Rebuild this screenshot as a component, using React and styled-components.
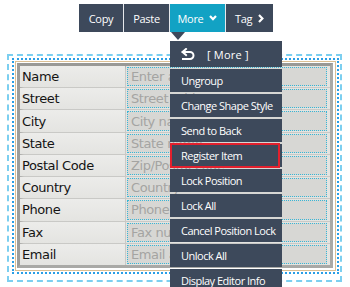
import React from 'react'
import styled, { createGlobalStyle } from 'styled-components'

const GlobalStyle = createGlobalStyle`
  html, body {
    margin: 0;
    padding: 0;
    background: #ffffff;
  }
`

const rows = [
  { label: 'Name', hint: 'Enter a name' },
  { label: 'Street', hint: 'Street address' },
  { label: 'City', hint: 'City name' },
  { label: 'State', hint: 'State name' },
  { label: 'Postal Code', hint: 'Zip/Postal code' },
  { label: 'Country', hint: 'Country name' },
  { label: 'Phone', hint: 'Phone number' },
  { label: 'Fax', hint: 'Fax number' },
  { label: 'Email', hint: 'Email address' },
]

const menuItems = [
  'Ungroup',
  'Change Shape Style',
  'Send to Back',
  'Register Item',
  'Lock Position',
  'Lock All',
  'Cancel Position Lock',
  'Unlock All',
  'Display Editor Info',
]

const BackIcon = () => (
  <svg width='14' height='13' viewBox='0 0 14 13' fill='none'>
    <path
      d='M5 1 L1.5 4 L5 7 M1.5 4 H9 a3.5 3.5 0 0 1 0 7 H2'
      stroke='#fff'
      strokeWidth='2'
      strokeLinecap='square'
      strokeLinejoin='miter'
    />
  </svg>
)

const ChevronDown = () => (
  <svg width='8' height='6' viewBox='0 0 8 6'>
    <path d='M1 1 L4 4.2 L7 1' stroke='#fff' strokeWidth='2.2' fill='none' />
  </svg>
)

const ChevronRight = () => (
  <svg width='6' height='9' viewBox='0 0 6 9'>
    <path d='M1 1 L4.4 4.5 L1 8' stroke='#fff' strokeWidth='2.2' fill='none' />
  </svg>
)

export default function App() {
  return (
    <>
      <GlobalStyle />
      <Page>
        <OuterFrame>
          <InnerFrame>
            <TanFrame>
              <FormTable>
                {rows.map((row) => (
                  <FormRow key={row.label}>
                    <LabelCell>{row.label}</LabelCell>
                    <InputCell>
                      <InputBox>{row.hint}</InputBox>
                    </InputCell>
                  </FormRow>
                ))}
              </FormTable>
            </TanFrame>
          </InnerFrame>
        </OuterFrame>

        <Toolbar>
          <ToolButton w={44}>Copy</ToolButton>
          <ToolButton w={45}>Paste</ToolButton>
          <ToolButton w={55} active>
            More <ChevronDown />
          </ToolButton>
          <ToolButton w={47}>
            Tag <ChevronRight />
          </ToolButton>
        </Toolbar>
        <Caret />

        <Menu>
          <MenuHead>
            <BackIcon />
            <span>[ More ]</span>
          </MenuHead>
          {menuItems.map((item) => (
            <MenuItem key={item} marked={item === 'Register Item'}>
              {item}
            </MenuItem>
          ))}
        </Menu>
      </Page>
    </>
  )
}

const Page = styled.div`
  position: relative;
  width: 350px;
  height: 287px;
  overflow: hidden;
  padding: 54px 8px 0 7px;
  box-sizing: border-box;
`

const OuterFrame = styled.div`
  box-sizing: border-box;
  width: 335px;
  height: 228px;
  display: flex;
  border: 2px dashed #7ccff0;
  padding: 2px 1px 6px 3px;
`

const InnerFrame = styled.div`
  flex: 1;
  display: flex;
  border: 2px dotted #2a9fe6;
  padding: 1px;
`

const TanFrame = styled.div`
  flex: 1;
  display: flex;
  border: 1px solid #dcc095;
  padding: 1px 2px 2px 1px;
`

const FormTable = styled.div`
  flex: 1;
  display: grid;
  grid-template-rows: repeat(9, 1fr);
  border: 3px solid #a9a9a6;
  border-top-color: #999996;
  border-left-color: #9d9d9a;
  background: #c9c9c6;
  gap: 1px;
  box-shadow: inset 2px 2px 3px rgba(0, 0, 0, 0.15);
`

const FormRow = styled.div`
  display: grid;
  grid-template-columns: 105px 1fr;
  gap: 1px;
`

const LabelCell = styled.div`
  display: flex;
  align-items: center;
  padding-left: 2px;
  background: linear-gradient(#ececea, #e4e4e1);
  font-family: 'DejaVu Sans', Verdana, sans-serif;
  font-size: 13px;
  letter-spacing: -0.4px;
  color: #141414;
`

const InputCell = styled.div`
  display: flex;
  padding: 1px 3px 1px 1px;
  background: #e4e4e1;
`

const InputBox = styled.div`
  flex: 1;
  display: flex;
  align-items: center;
  border: 1px dotted #38b6d6;
  background: #d7d7d4;
  padding-left: 3px;
  font-family: 'DejaVu Sans', Verdana, sans-serif;
  font-size: 13px;
  letter-spacing: -0.4px;
  color: #a4a4a2;
  white-space: nowrap;
  overflow: hidden;
`

const Toolbar = styled.div`
  position: absolute;
  left: 79px;
  top: 4px;
  height: 28px;
  display: flex;
  gap: 1px;
  background: #e6e8ec;
`

const ToolButton = styled.div`
  width: ${(p) => p.w}px;
  display: flex;
  align-items: center;
  justify-content: center;
  gap: 6px;
  background: ${(p) => (p.active ? '#12a2c4' : '#3d495b')};
  color: #ffffff;
  font-family: 'Open Sans', 'Noto Sans', sans-serif;
  font-size: 11px;
  letter-spacing: -0.3px;
`

const Caret = styled.div`
  position: absolute;
  left: 171px;
  top: 32px;
  width: 0;
  height: 0;
  border-left: 7px solid transparent;
  border-right: 7px solid transparent;
  border-top: 8px solid #3d495b;
`

const Menu = styled.div`
  position: absolute;
  left: 170px;
  top: 41px;
  width: 112px;
  display: flex;
  flex-direction: column;
  gap: 2px;
  font-family: 'Open Sans', 'Noto Sans', sans-serif;
  font-size: 11px;
  letter-spacing: -0.5px;
  color: #ffffff;
`

const MenuHead = styled.div`
  height: 26px;
  display: flex;
  align-items: center;
  gap: 12px;
  padding-left: 11px;
  background: #3d495b;
  span {
    letter-spacing: 0.2px;
  }
`

const MenuItem = styled.div`
  position: relative;
  height: 23px;
  display: flex;
  align-items: center;
  padding-left: 11px;
  background: #3d495b;
  white-space: nowrap;
  &::after {
    content: '';
    display: ${(p) => (p.marked ? 'block' : 'none')};
    position: absolute;
    left: 0;
    right: 2px;
    top: -1px;
    bottom: -1px;
    border: 2px solid #e3202d;
  }
`
